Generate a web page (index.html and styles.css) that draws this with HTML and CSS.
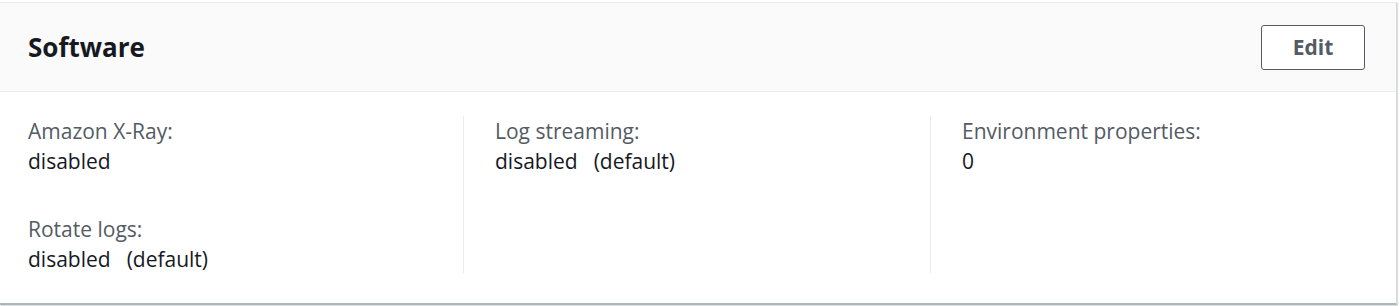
FILE: index.html
```
<!DOCTYPE html>
<html>
<head>
<meta charset="utf-8">
<link rel="stylesheet" href="styles.css">
</head>
<body>
<div class="card">
  <div class="card-header">
    <h2 class="title">Software</h2>
    <button class="btn">Edit</button>
  </div>
  <div class="card-body">
    <div class="col">
      <div class="field">
        <div class="label">Amazon X-Ray:</div>
        <div class="value">disabled</div>
      </div>
      <div class="field">
        <div class="label">Rotate logs:</div>
        <div class="value">disabled<span class="note">(default)</span></div>
      </div>
    </div>
    <div class="col col-div">
      <div class="field">
        <div class="label">Log streaming:</div>
        <div class="value">disabled<span class="note">(default)</span></div>
      </div>
    </div>
    <div class="col col-div">
      <div class="field">
        <div class="label">Environment properties:</div>
        <div class="value">0</div>
      </div>
    </div>
  </div>
</div>
</body>
</html>
```
FILE: styles.css
```
* { box-sizing: border-box; }
html, body { margin: 0; padding: 0; background: #fff; }
body {
  font-family: "Open Sans", "Noto Sans", Arial, sans-serif;
  color: #16191f;
  padding-top: 2px;
  height: 306px;
  overflow: hidden;
}
.card {
  width: 1397px;
  height: 303px;
  border-top: 1px solid #eaeded;
  border-right: 1px solid #d5dbdb;
  border-bottom: 2px solid #aab7b8;
  box-shadow: 1px 1px 1px rgba(0,0,0,0.12);
  background: #fff;
  display: flex;
  flex-direction: column;
}
.card-header {
  height: 89px;
  background: #fafafa;
  border-bottom: 1px solid #eaeded;
  display: flex;
  align-items: center;
  justify-content: space-between;
  padding: 0 31px 0 28px;
}
.title {
  margin: 0;
  font-size: 26px;
  font-weight: 700;
  color: #16191f;
  letter-spacing: 0;
}
.btn {
  font-family: inherit;
  width: 104px;
  height: 45px;
  background: #fff;
  border: 1px solid #545b64;
  border-radius: 3px;
  color: #545b64;
  font-size: 21px;
  font-weight: 700;
  padding: 0 0 2px;
  margin-top: 1px;
}
.card-body {
  display: grid;
  grid-template-columns: 435px 467px 1fr;
  padding: 24px 0 0 28px;
  flex: 1;
}
.col {
  display: flex;
  flex-direction: column;
  gap: 38px;
  height: 157px;
}
.col-div {
  border-left: 1px solid #eaeded;
  padding-left: 31px;
}
.label {
  font-size: 21px;
  line-height: 30px;
  color: #545b64;
}
.value {
  font-size: 21px;
  line-height: 30px;
  color: #16191f;
}
.note { margin-left: 16px; }
```
